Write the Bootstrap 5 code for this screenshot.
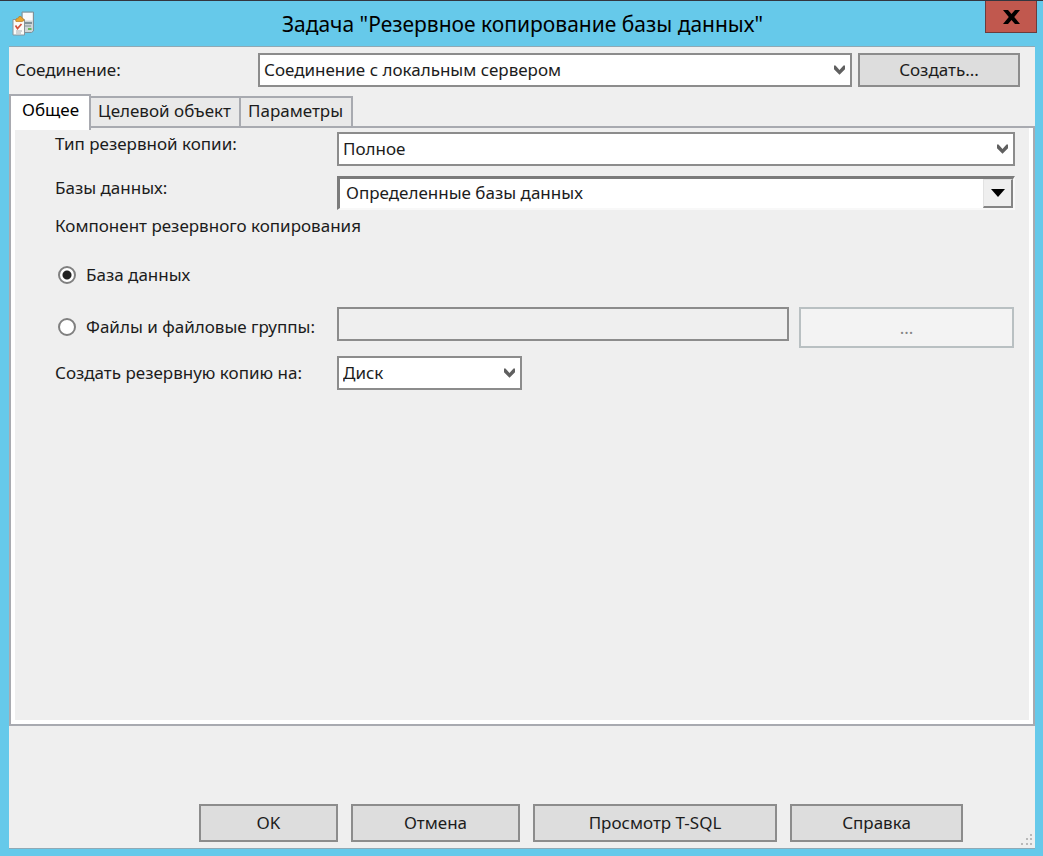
<!DOCTYPE html>
<html lang="ru">
<head>
<meta charset="utf-8">
<meta name="viewport" content="width=device-width, initial-scale=1">
<title>Задача "Резервное копирование базы данных"</title>
<link href="https://cdn.jsdelivr.net/npm/bootstrap@5.3.0/dist/css/bootstrap.min.css" rel="stylesheet">
<style>
  body { background: #66c9ea; color: #1c1c1c; font-family: "Noto Sans", "Open Sans", sans-serif; font-size: 17px; line-height: 24px; }
  .dialog { border-top: 1px solid #33363f; padding: 0 8px 7px 9px; }
  .titlebar { height: 45px; }
  .title-text { font-size: 21px; line-height: 46px; color: #000; padding-left: 24px; }
  .app-icon { margin: 10px 0 0 3px; width: 24px; height: 26px; }
  .btn-x { width: 52px; height: 32px; margin-right: -2px; background: #c1584e; border: 1px solid #6b3c3d; border-top: 0; }
  .client { background: #efefef; border: solid #8fa9b5; border-width: 1px 0; }
  .conn { padding: 6px 15px 7px 6px; gap: 6px; }
  .conn-label { width: 237px; }
  .form-select, .form-control { border: 2px solid #8c8c8c; border-radius: 0; font-size: 17px; line-height: 24px; height: 34px; padding: 0 32px 0 4px; color: #1c1c1c; }
  .form-select { background-color: #fff; background-image: url("data:image/svg+xml,%3Csvg xmlns='http://www.w3.org/2000/svg' viewBox='0 0 11 10'%3E%3Cpath d='M0 .5l1.500 0 4 4.500 4-4.500H11v3.800L5.500 9.700 0 4.300z' fill='%23606060'/%3E%3C/svg%3E"); background-size: 11px 10px; background-position: right 5px center; }
  .form-control:disabled { background: #efefef; opacity: 1; }
  .btn-win { --bs-btn-bg: #ddd; --bs-btn-color: #1c1c1c; --bs-btn-border-color: #8c8c8c; --bs-btn-hover-bg: #e5e5e5; --bs-btn-hover-border-color: #707070; --bs-btn-disabled-bg: #f3f3f3; --bs-btn-disabled-color: #858585; --bs-btn-disabled-border-color: #b9c0c2; --bs-btn-disabled-opacity: 1; border-width: 2px; border-radius: 0; font-size: 17px; line-height: 24px; padding: 0; height: 38px; }
  .btn-create { width: 162px; height: 34px; }
  .nav-tabs { border: 0; margin-bottom: -2px; }
  .nav-tabs .nav-link { border: 2px solid #a8aab0; border-radius: 0; background: #e9e9e9; color: #1c1c1c; padding: 1px 8px 3px 7px; height: 32px; margin: 0 0 0 -2px; line-height: 24px; }
  .nav-tabs .nav-link.active { background: #fff; border-color: #a8aab0; border-bottom: 0; padding: 0 10px 6px 11px; height: 36px; margin: 0 0 -2px; }
  .tab-content { border: 2px solid #a8aab0; background: #fff; padding: 0 4px 4px; }
  .page { background: #efefef; padding: 4px 14px 0 40px; }
  .form-grid { display: grid; grid-template-columns: 282px 1fr; row-gap: 10px; align-items: start; }
  .opt { display: flex; align-items: center; gap: 10px; margin: 0; padding: 0 0 0 3px; min-height: 0; }
  .opt .form-check-input { margin: 0; float: none; width: 18px; height: 18px; border: 2px solid #808080; background-color: #fff; }
  .opt .form-check-input:checked { background-image: radial-gradient(circle, #222 4px, transparent 5px); }
  .first-opt { padding-top: 25px; padding-bottom: 20px; }
  .db-box .form-select { border-color: #7b7b7b #f8f8f8 #f8f8f8 #7b7b7b; border-width: 3px 2px 2px 3px; background-image: none; padding: 0 32px 2px 6px; }
  .drop-face { top: 3px; right: 2px; bottom: 2px; width: 30px; background: #efefef; border: solid; border-width: 1px 2px 2px 1px; border-color: #e2e2e2 #858585 #858585 #e2e2e2; pointer-events: none; }
  .files { gap: 10px; margin-right: 1px; }
  .files .btn { flex: 0 0 215px; height: 41px; }
  .dest { width: 185px; }
  .actions { padding: 78px 72px 6px 9px; gap: 13px; }
  .w-ok { width: 139px; } .w-cancel { width: 169px; } .w-sql { width: 244px; } .w-help { width: 173px; }
  .grip { right: 2px; bottom: 2px; }
</style>
</head>
<body>
<main class="dialog min-vh-100 d-flex flex-column">
  <header class="titlebar d-flex align-items-start flex-shrink-0">
    <svg class="app-icon flex-shrink-0" viewBox="0 0 24 26" aria-hidden="true">
      <path d="M10 1h11.500v19l-2 1.500H10z" fill="#cfd6d8" stroke="#7d9098"/>
      <path d="M11 2h9.500v7.500H11z" fill="#fafafa"/><path d="M13 11h7v2h-7zM13 14.500h6v1h-6z" fill="#829299"/>
      <path d="M16 17h3.500v2H16z" fill="#69b75e"/>
      <path d="M1 8.500h11.500V24H1z" fill="#fbfbf9" stroke="#8a949a"/>
      <path d="M3.500 10l1-2.500 2-.5L7 5.500h2L10 7l1.500.8.5 1.700-2 1H4z" fill="#e9a62e" stroke="#bb7b22" stroke-width=".7"/>
      <path d="M3.500 14.500l2 3 4-4.500" fill="none" stroke="#d5513c" stroke-width="1.700"/>
      <path d="M4 20h6M4 22h5" stroke="#a7adb2"/>
    </svg>
    <h1 class="title-text flex-grow-1 text-center fw-normal m-0">Задача "Резервное копирование базы данных"</h1>
    <button type="button" class="btn-x p-0 d-flex justify-content-center align-items-center" aria-label="Закрыть">
      <svg width="17" height="14" viewBox="0 0 17 14"><path d="M0 0h5l3.500 4L12 0h5l-5.800 7L17 14h-5l-3.500-4L5 14H0l5.800-7z" fill="#000"/></svg>
    </button>
  </header>

  <form class="client flex-grow-1 d-flex flex-column position-relative">
    <div class="conn d-flex align-items-center">
      <label for="conn" class="conn-label flex-shrink-0">Соединение:</label>
      <select id="conn" class="form-select"><option>Соединение с локальным сервером</option></select>
      <button type="button" class="btn btn-win btn-create flex-shrink-0">Создать...</button>
    </div>

    <ul class="nav nav-tabs align-items-end position-relative" role="tablist">
      <li class="nav-item"><button type="button" class="nav-link active" role="tab" data-bs-toggle="tab" data-bs-target="#general" aria-selected="true">Общее</button></li>
      <li class="nav-item"><button type="button" class="nav-link" role="tab" data-bs-toggle="tab" data-bs-target="#target" aria-selected="false">Целевой объект</button></li>
      <li class="nav-item"><button type="button" class="nav-link" role="tab" data-bs-toggle="tab" data-bs-target="#params" aria-selected="false">Параметры</button></li>
    </ul>
    <div class="tab-content flex-grow-1 d-flex flex-column">
      <div id="general" class="tab-pane show active page flex-grow-1" role="tabpanel">
        <div class="form-grid">
          <label for="kind">Тип резервной копии:</label>
          <select id="kind" class="form-select"><option>Полное</option></select>
          <label for="dbs">Базы данных:</label>
          <div class="db-box position-relative">
            <select id="dbs" class="form-select"><option>Определенные базы данных</option></select>
            <span class="drop-face position-absolute d-flex align-items-center justify-content-center"><svg width="14" height="8" viewBox="0 0 14 8"><path d="M0 0h14L7 8z"/></svg></span>
          </div>
        </div>
        <div class="mt-1" id="part">Компонент резервного копирования</div>
        <div role="radiogroup" aria-labelledby="part">
          <div class="opt first-opt">
            <input class="form-check-input" type="radio" name="part" id="r1" checked><label for="r1">База данных</label>
          </div>
          <div class="form-grid">
            <div class="opt pt-2">
              <input class="form-check-input" type="radio" name="part" id="r2"><label for="r2">Файлы и файловые группы:</label>
            </div>
            <div class="files d-flex align-items-start">
              <input type="text" class="form-control" disabled aria-label="Файлы и файловые группы">
              <button type="button" class="btn btn-win" disabled>...</button>
            </div>
          </div>
        </div>
        <div class="form-grid align-items-center mt-2">
          <label for="dest">Создать резервную копию на:</label>
          <select id="dest" class="form-select dest"><option>Диск</option></select>
        </div>
      </div>
      <div id="target" class="tab-pane page flex-grow-1" role="tabpanel"></div>
      <div id="params" class="tab-pane page flex-grow-1" role="tabpanel"></div>
    </div>

    <div class="actions d-flex justify-content-end">
      <button type="button" class="btn btn-win w-ok">OK</button>
      <button type="button" class="btn btn-win w-cancel">Отмена</button>
      <button type="button" class="btn btn-win w-sql">Просмотр T-SQL</button>
      <button type="button" class="btn btn-win w-help">Справка</button>
    </div>
    <svg class="grip position-absolute" width="12" height="12" viewBox="0 0 12 12" fill="#b9b9b9" aria-hidden="true"><path d="M9 0h2v2H9zM5 4h2v2H5zM9 4h2v2H9zM0 9h2v2H0zM5 9h2v2H5zM9 9h2v2H9z"/></svg>
  </form>
</main>
<script src="https://cdn.jsdelivr.net/npm/bootstrap@5.3.0/dist/js/bootstrap.bundle.min.js"></script>
</body>
</html>
